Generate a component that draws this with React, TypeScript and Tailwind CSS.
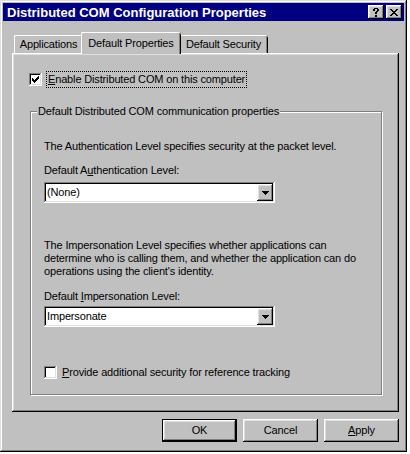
import React from "react";

const raised =
  "shadow-[inset_-1px_-1px_#000000,inset_1px_1px_#ffffff,inset_-2px_-2px_#808080,inset_2px_2px_#dfdfdf]";
const sunken =
  "shadow-[inset_-1px_-1px_#ffffff,inset_1px_1px_#808080,inset_-2px_-2px_#dfdfdf,inset_2px_2px_#000000]";

function CloseGlyph() {
  return (
    <svg width="8" height="7" viewBox="0 0 8 7" shapeRendering="crispEdges">
      <path
        fill="#000"
        d="M0 0h2v1H0zM6 0h2v1H6zM1 1h2v1H1zM5 1h2v1H5zM2 2h4v1H2zM3 3h2v1H3zM2 4h4v1H2zM1 5h2v1H1zM5 5h2v1H5zM0 6h2v1H0zM6 6h2v1H6z"
      />
    </svg>
  );
}

function HelpGlyph() {
  return (
    <svg width="6" height="9" viewBox="0 0 6 9" shapeRendering="crispEdges">
      <path
        fill="#000"
        d="M1 0h4v1H1zM0 1h2v2H0zM4 1h2v2H4zM3 3h2v1H3zM2 4h2v2H2zM2 7h2v2H2z"
      />
    </svg>
  );
}

function CheckBox({ checked }: { checked: boolean }) {
  return (
    <div className={`w-[13px] h-[13px] bg-white flex items-center justify-center shrink-0 ${sunken}`}>
      {checked && (
        <svg width="7" height="7" viewBox="0 0 7 7" shapeRendering="crispEdges">
          <path
            fill="#000"
            d="M6 0h1v3H6zM5 1h1v3H5zM4 2h1v3H4zM3 3h1v3H3zM2 4h1v3H2zM1 3h1v3H1zM0 2h1v3H0z"
          />
        </svg>
      )}
    </div>
  );
}

function Select({ value }: { value: string }) {
  return (
    <div className={`w-[231px] h-[21px] bg-white flex items-center p-[2px] ${sunken}`}>
      <span className="flex-1 pl-[1px] leading-[13px]">{value}</span>
      <div className={`w-[16px] h-[17px] bg-[#c0c0c0] flex items-center justify-center ${raised}`}>
        <svg width="7" height="4" viewBox="0 0 7 4" shapeRendering="crispEdges">
          <path fill="#000" d="M0 0h7v1H0zM1 1h5v1H1zM2 2h3v1H2zM3 3h1v1H3z" />
        </svg>
      </div>
    </div>
  );
}

export default function App() {
  return (
    <div className="w-[410px] h-[454px] bg-white font-['Liberation_Sans',Arial,sans-serif] text-[11px] tracking-[-0.15px] text-black">
      <div
        className={`w-[407px] h-[452px] bg-[#c0c0c0] p-[3px] flex flex-col shadow-[inset_-1px_-1px_#000000,inset_1px_1px_#dfdfdf,inset_-2px_-2px_#808080,inset_2px_2px_#ffffff]`}
      >
        {/* Title bar */}
        <div className="h-[18px] bg-[#000080] flex items-center justify-between pl-[4px] pr-[2px] shrink-0">
          <span className="text-white font-bold text-[13px] tracking-normal leading-[15px] whitespace-nowrap">
            Distributed COM Configuration Properties
          </span>
          <div className="flex gap-[2px]">
            <div className={`w-[16px] h-[14px] bg-[#c0c0c0] flex items-center justify-center ${raised}`}>
              <HelpGlyph />
            </div>
            <div className={`w-[16px] h-[14px] bg-[#c0c0c0] flex items-center justify-center ${raised}`}>
              <CloseGlyph />
            </div>
          </div>
        </div>

        <div className="mt-[11px] ml-[9px] w-[387px] flex flex-col">
          {/* Tabs */}
          <div className="flex items-end ml-[2px] h-[21px]">
            <div className="w-[69px] h-[18px] flex items-center justify-center rounded-t-[2px] shadow-[inset_0_1px_#ffffff,inset_1px_0_#ffffff,inset_-1px_0_#000000,inset_-2px_0_#808080] leading-[13px] whitespace-nowrap">
              Applications
            </div>
            <div className="relative z-10 w-[100px] h-[22px] -mb-[1px] -mx-[2px] bg-[#c0c0c0] flex items-center justify-center rounded-t-[2px] shadow-[inset_0_1px_#ffffff,inset_1px_0_#ffffff,inset_-1px_0_#000000,inset_-2px_0_#808080] leading-[13px] whitespace-nowrap">
              Default Properties
            </div>
            <div className="w-[89px] h-[18px] flex items-center justify-center rounded-t-[2px] shadow-[inset_0_1px_#ffffff,inset_1px_0_#ffffff,inset_-1px_0_#000000,inset_-2px_0_#808080] leading-[13px] whitespace-nowrap">
              Default Security
            </div>
          </div>

          {/* Panel */}
          <div className={`h-[359px] bg-[#c0c0c0] pl-[17px] pt-[18px] flex flex-col ${raised}`}>
            <div className="h-[17px] flex items-center">
              <CheckBox checked />
              <div className="ml-[4px] border border-dotted border-black px-[1px] py-[1px] leading-[13px] whitespace-nowrap">
                <span className="underline">E</span>nable Distributed COM on this computer
              </div>
            </div>

            {/* Group box */}
            <div className="relative mt-[23px] ml-[1px] w-[352px] border border-[#808080] shadow-[inset_1px_1px_#ffffff,1px_1px_#ffffff] pl-[13px] pt-[28px] pb-[15px] flex flex-col items-start">
              <span className="absolute top-[-7px] left-[6px] px-[1px] bg-[#c0c0c0] leading-[13px] whitespace-nowrap">
                Default Distributed COM communication properties
              </span>
              <p className="leading-[13px] whitespace-nowrap">
                The Authentication Level specifies security at the packet level.
              </p>
              <p className="mt-[11px] leading-[13px] whitespace-nowrap">
                Default A<span className="underline">u</span>thentication Level:
              </p>
              <div className="mt-[5px]">
                <Select value="(None)" />
              </div>
              <p className="mt-[36px] leading-[13px] whitespace-nowrap">
                The Impersonation Level specifies whether applications can
                <br />
                determine who is calling them, and whether the application can do
                <br />
                operations using the client's identity.
              </p>
              <p className="mt-[12px] leading-[13px] whitespace-nowrap">
                Default <span className="underline">I</span>mpersonation Level:
              </p>
              <div className="mt-[3px]">
                <Select value="Impersonate" />
              </div>
              <div className="mt-[39px] h-[13px] flex items-center">
                <CheckBox checked={false} />
                <span className="ml-[5px] leading-[13px] whitespace-nowrap">
                  <span className="underline">P</span>rovide additional security for reference tracking
                </span>
              </div>
            </div>
          </div>

          {/* Buttons */}
          <div className="mt-[7px] flex justify-end gap-[6px]">
            <button className="w-[75px] h-[23px] bg-[#c0c0c0] border border-black shadow-[inset_-1px_-1px_#000000,inset_1px_1px_#ffffff,inset_-2px_-2px_#808080,inset_2px_2px_#dfdfdf] leading-[13px]">
              OK
            </button>
            <button className={`w-[75px] h-[23px] bg-[#c0c0c0] ${raised} leading-[13px]`}>
              Cancel
            </button>
            <button className={`w-[75px] h-[23px] bg-[#c0c0c0] ${raised} leading-[13px]`}>
              <span className="underline">A</span>pply
            </button>
          </div>
        </div>
      </div>
    </div>
  );
}
